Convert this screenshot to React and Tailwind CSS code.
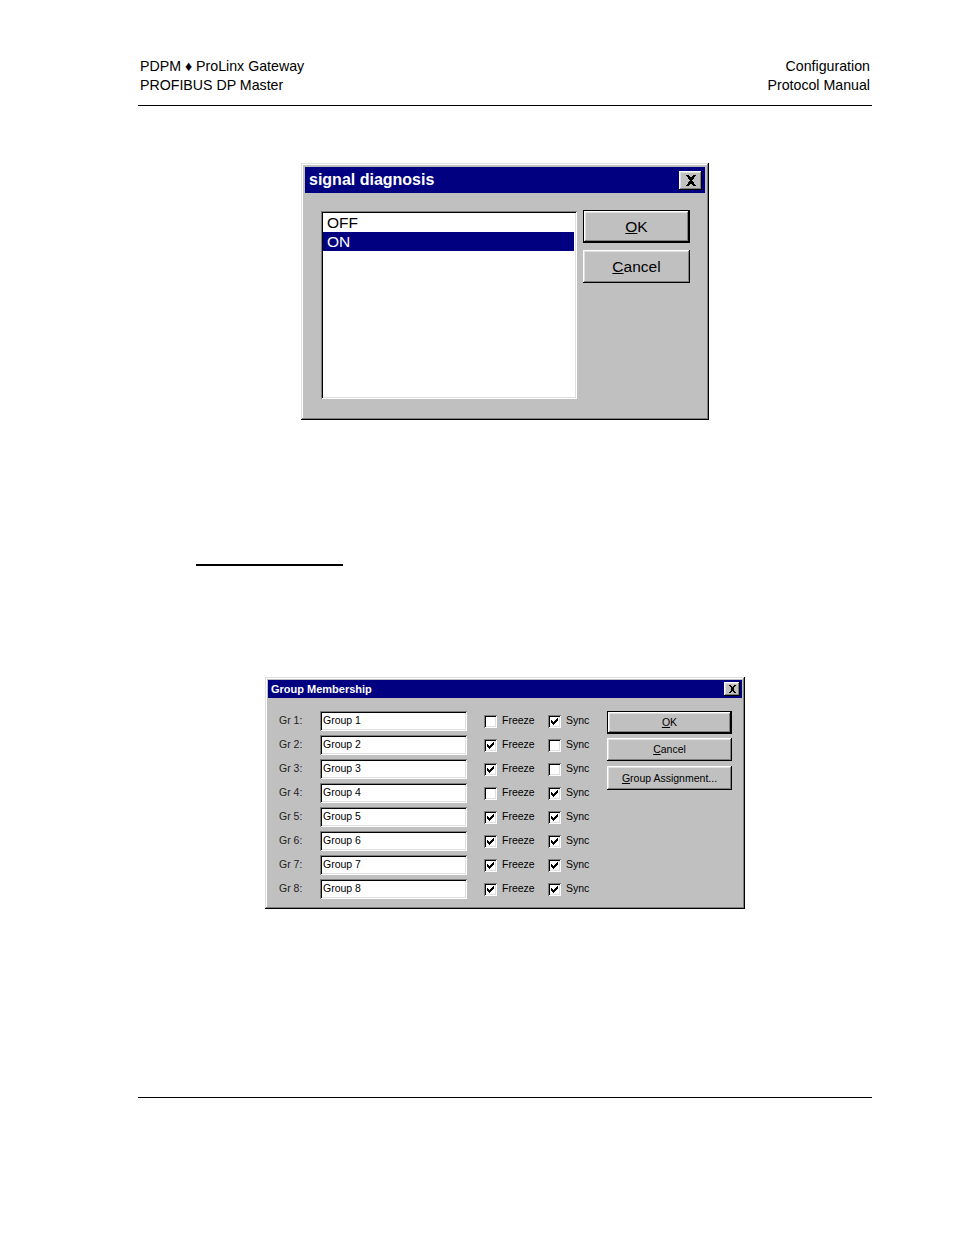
import React from 'react';

// Win95-style bevels
const frame = 'bg-[#c0c0c0] shadow-[inset_-1px_-1px_0_#000000,inset_1px_1px_0_#dfdfdf,inset_-2px_-2px_0_#808080,inset_2px_2px_0_#ffffff]';
const raised = 'bg-[#c0c0c0] shadow-[inset_-1px_-1px_0_#000000,inset_1px_1px_0_#ffffff,inset_-2px_-2px_0_#808080,inset_2px_2px_0_#dfdfdf]';
const sunken = 'bg-white shadow-[inset_1px_1px_0_#808080,inset_-1px_-1px_0_#ffffff,inset_2px_2px_0_#000000,inset_-2px_-2px_0_#dfdfdf]';
const sans = "font-['Liberation_Sans',Arial,sans-serif]";

const CloseBox = ({ w, h, size }) => (
  <div className={`${raised} flex items-center justify-center ${w} ${h}`}>
    <svg width={size} height={size - 1} viewBox="0 0 10 9" shapeRendering="crispEdges">
      <path d="M1 0h2l2 2.5L7 0h2L6 4.5 9 9H7L5 6.5 3 9H1l3-4.5z" fill="#000" />
    </svg>
  </div>
);

const Check = ({ on }) => (
  <div className={`${sunken} w-[13px] h-[13px] shrink-0 relative`}>
    {on && (
      <svg className="absolute left-[3px] top-[3px]" width="7" height="7" viewBox="0 0 7 7" shapeRendering="crispEdges">
        <path d="M6 0h1v3H6v1H5v1H4v1H3v1H2V6H1V5H0V2h1v1h1v1h1V3h1V2h1V1h1z" fill="#000" />
      </svg>
    )}
  </div>
);

const groups = [
  { freeze: false, sync: true },
  { freeze: true, sync: false },
  { freeze: true, sync: false },
  { freeze: false, sync: true },
  { freeze: true, sync: true },
  { freeze: true, sync: true },
  { freeze: true, sync: true },
  { freeze: true, sync: true },
];

function SignalDialog() {
  return (
    <div className={`${frame} w-[408px] h-[257px] p-[4px] flex flex-col ${sans}`}>
      <div className="h-[26px] bg-[#000080] flex items-center justify-between pl-[4px] pr-[3px]">
        <span className="text-white font-bold text-[16px] leading-none">signal diagnosis</span>
        <CloseBox w="w-[23px]" h="h-[19px]" size={12} />
      </div>
      <div className="flex pt-[18px] pl-[16px] gap-[6px] text-[15.5px] leading-none">
        <div className={`${sunken} w-[256px] h-[188px] p-[2px] pr-[3px]`}>
          <div className="h-[19px] pl-[4px] flex items-center text-black">OFF</div>
          <div className="h-[19px] pl-[4px] flex items-center bg-[#000080] text-white">ON</div>
        </div>
        <div className="flex flex-col gap-[7px] -mt-[1px]">
          <div className="w-[107px] h-[33px] border border-black">
            <div className={`${raised} w-full h-full flex items-center justify-center text-black`}>
              <span><span className="underline">O</span>K</span>
            </div>
          </div>
          <div className={`${raised} w-[107px] h-[33px] flex items-center justify-center text-black`}>
            <span><span className="underline">C</span>ancel</span>
          </div>
        </div>
      </div>
    </div>
  );
}

function GroupDialog() {
  return (
    <div className={`${frame} w-[480px] h-[232px] p-[3px] flex flex-col ${sans}`}>
      <div className="h-[18px] bg-[#000080] flex items-center justify-between pl-[3px] pr-[2px]">
        <span className="text-white font-bold text-[11px] leading-none">Group Membership</span>
        <CloseBox w="w-[16px]" h="h-[14px]" size={9} />
      </div>
      <div className="flex pt-[11px] pl-[11px] text-[10.5px] text-black leading-none">
        <div className="flex flex-col w-[328px]">
          {groups.map((g, i) => (
            <div key={i} className="h-[24px] flex items-center">
              <span className="w-[41px] pb-[2px] text-[#202020]">Gr {i + 1}:</span>
              <div className={`${sunken} w-[147px] h-[20px] flex items-center pl-[3px] pb-[2px]`}>Group {i + 1}</div>
              <div className="ml-[17px] w-[64px] flex items-center gap-[5px]">
                <Check on={g.freeze} />
                <span className="pb-[2px]">Freeze</span>
              </div>
              <div className="w-[59px] flex items-center gap-[5px]">
                <Check on={g.sync} />
                <span className="pb-[2px]">Sync</span>
              </div>
            </div>
          ))}
        </div>
        <div className="flex flex-col w-[125px] pt-[2px]">
          <div className="h-[23px] border border-black">
            <div className={`${raised} w-full h-full flex items-center justify-center`}>
              <span><span className="underline">O</span>K</span>
            </div>
          </div>
          <div className={`${raised} h-[23px] mt-[4px] flex items-center justify-center`}>
            <span><span className="underline">C</span>ancel</span>
          </div>
          <div className={`${raised} h-[24px] mt-[5px] flex items-center justify-center`}>
            <span><span className="underline">G</span>roup Assignment...</span>
          </div>
        </div>
      </div>
    </div>
  );
}

export default function App() {
  return (
    <div className="w-[954px] min-h-[1235px] bg-white">
      <div className="ml-[138px] w-[734px] pt-[57px]">
        {/* page header */}
        <div className={`flex justify-between border-b border-black pb-[10px] px-[2px] text-[14.2px] leading-[19px] text-black ${sans}`}>
          <div>
            <div>PDPM ♦ ProLinx Gateway</div>
            <div>PROFIBUS DP Master</div>
          </div>
          <div className="text-right">
            <div>Configuration</div>
            <div>Protocol Manual</div>
          </div>
        </div>

        <div className="flex justify-center mt-[57px]">
          <SignalDialog />
        </div>

        <div className="ml-[58px] w-[147px] h-[2px] bg-black mt-[144px]" />

        <div className="flex justify-center mt-[111px]">
          <GroupDialog />
        </div>

        <div className="h-px bg-black mt-[188px]" />
      </div>
    </div>
  );
}
